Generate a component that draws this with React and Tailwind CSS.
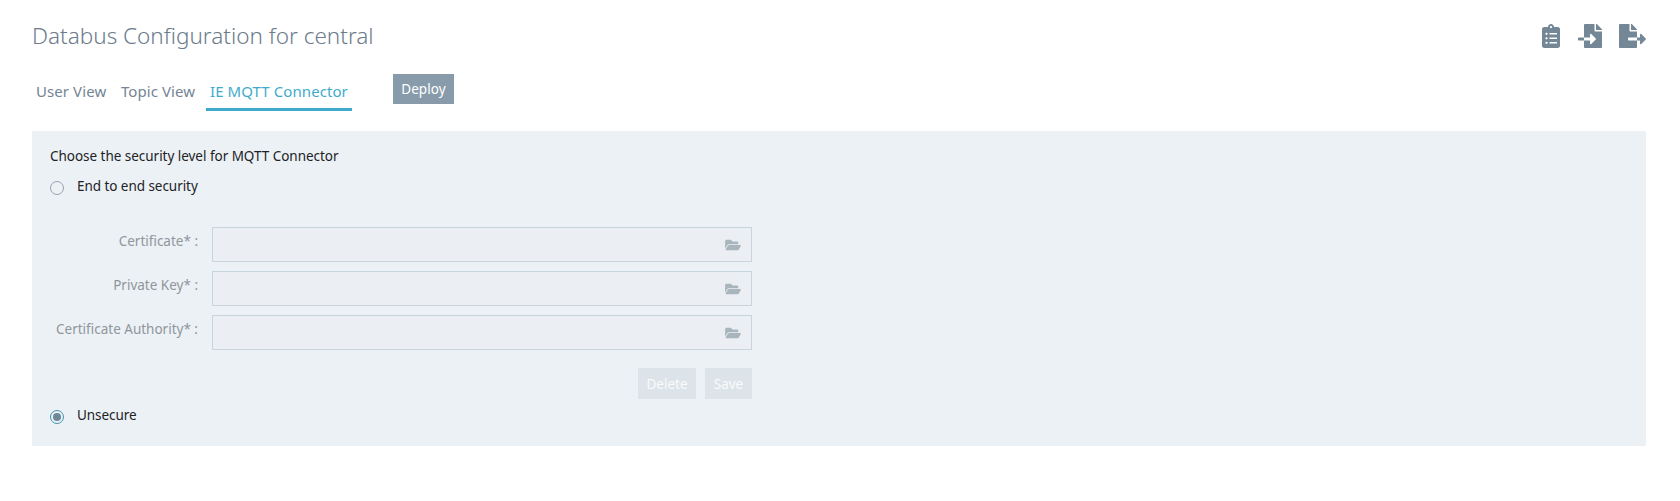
import { FaClipboardList, FaFileExport, FaFileImport, FaFolderOpen } from 'react-icons/fa';

function Field({ label }) {
  return (
    <div className="flex h-[35px]">
      <div className="w-[166px] shrink-0 pt-[4px] text-right text-[13.5px] leading-5 text-[#8f969c] whitespace-pre">
        {label}
      </div>
      <div className="ml-[14px] flex h-[35px] w-[540px] items-center justify-end border border-[#c8d5dc] bg-[#ebeff4] pr-[10px]">
        <FaFolderOpen className="h-[14px] w-[16px] text-[#a8b5bc]" />
      </div>
    </div>
  );
}

function Radio({ label, checked }) {
  return (
    <div className="flex h-5 items-center">
      <span
        className={
          checked
            ? 'mt-[3px] flex size-[14px] items-center justify-center rounded-full border border-[#3f95b0] bg-[#edf2f6]'
            : 'mt-[3px] flex size-[14px] items-center justify-center rounded-full border border-[#94a3b0]'
        }
      >
        {checked && <span className="size-2 rounded-full bg-[#6f8796]" />}
      </span>
      <span className="ml-[13px] text-[13.5px] leading-5 tracking-[-0.05px] text-[#1c2226]">{label}</span>
    </div>
  );
}

export default function App() {
  return (
    <div className="h-[501px] w-[1680px] overflow-hidden bg-white pr-[34px] pl-8 font-['Noto_Sans',sans-serif]">
      <header className="flex h-[62px] items-start justify-between pt-[19px]">
        <h1 className="text-[22.5px] leading-[34px] font-[350] text-[#6c7c8c]">
          Databus Configuration for central
        </h1>
        <div className="flex items-start pt-[5px] text-[#748796]">
          <FaClipboardList className="h-6 w-[18px]" />
          <FaFileImport className="ml-[18px] h-6 w-6" />
          <FaFileExport className="ml-[17px] h-6 w-[27px]" />
        </div>
      </header>

      <nav className="flex h-[69px] items-start pt-[12px] text-[15px] leading-6 tracking-[0.08px] text-[#748494]">
        <div className="w-[84px] pt-[5px] pl-[4px]">User View</div>
        <div className="w-[90px] pt-[5px] pl-[5px]">Topic View</div>
        <div className="h-[37px] w-[146px] border-b-3 border-[#3fabca] pt-[5px] pl-[4px] text-[#3fabca] whitespace-nowrap">
          IE MQTT Connector
        </div>
        <button className="ml-[41px] h-[30px] w-[61px] bg-[#889bab] text-[13.5px] leading-[30px] text-white">
          Deploy
        </button>
      </nav>

      <main className="h-[315px] bg-[#ecf1f5] pl-[18px] pt-[15px]">
        <p className="text-[13.5px] leading-5 tracking-[-0.03px] text-[#1c2226]">
          Choose the security level for MQTT Connector
        </p>
        <div className="mt-[10px]">
          <Radio label="End to end security" />
        </div>
        <div className="-ml-[18px] mt-[31px] flex flex-col gap-[9px]">
          <Field label="Certificate* :" />
          <Field label="Private Key* :" />
          <Field label="Certificate Authority* :" />
        </div>
        <div className="mt-[18px] flex w-[702px] justify-end gap-[9px] text-[13.5px] leading-[31px] text-[#f8fafb]">
          <button className="h-[31px] w-[58px] bg-[#dde4e9] pt-px leading-[30px]">Delete</button>
          <button className="h-[31px] w-[47px] bg-[#dde4e9] pt-px leading-[30px]">Save</button>
        </div>
        <div className="mt-[6px]">
          <Radio label="Unsecure" checked />
        </div>
      </main>
    </div>
  );
}
